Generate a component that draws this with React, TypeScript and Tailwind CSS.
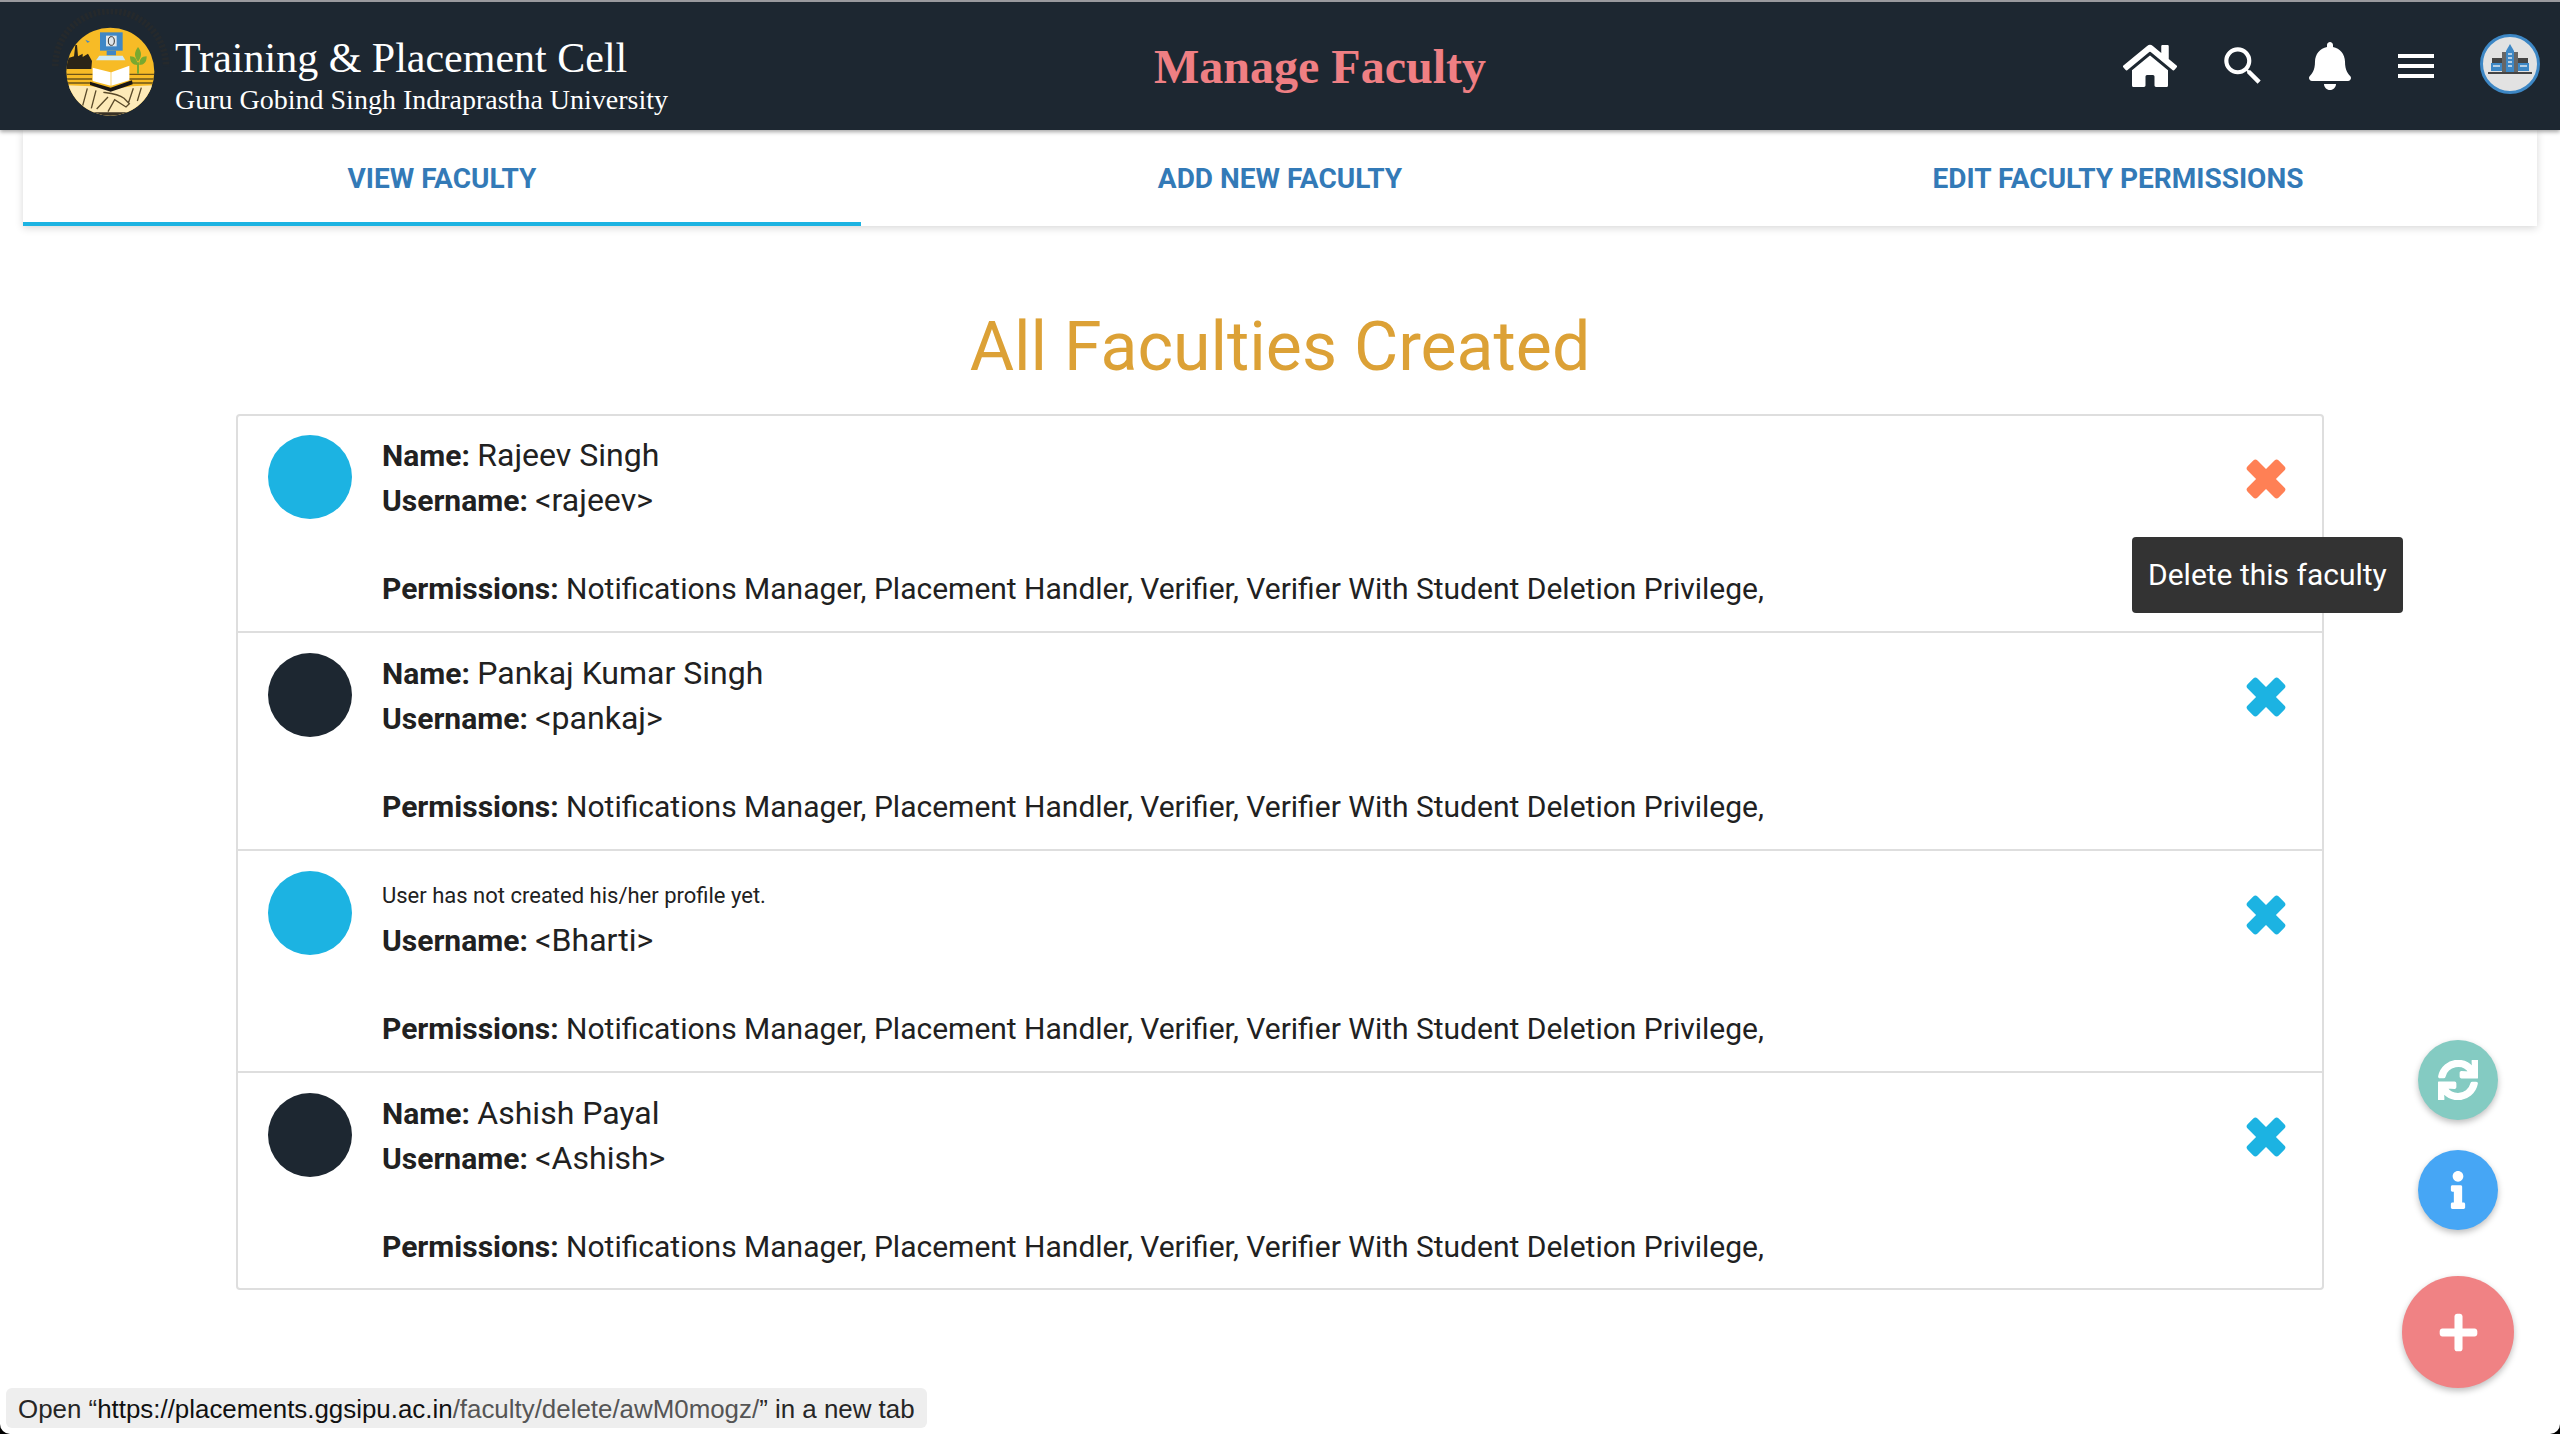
import { FaBell, FaHome, FaInfo, FaPlus, FaSync } from "react-icons/fa";
import { MdMenu, MdSearch } from "react-icons/md";

const faculties = [
  { name: "Rajeev Singh", username: "rajeev", color: "bg-[#1cb3e2]", row: "h-[215px] pt-[19px]" },
  { name: "Pankaj Kumar Singh", username: "pankaj", color: "bg-[#1d2731]", row: "h-[218px] border-t-2 pt-[20px]" },
  { name: "", username: "Bharti", color: "bg-[#1cb3e2]", row: "h-[222px] border-t-2 pt-[20px]" },
  { name: "Ashish Payal", username: "Ashish", color: "bg-[#1d2731]", row: "h-[217px] border-t-2 pt-[20px]" },
];

function Logo() {
  return (
    <svg viewBox="0 0 390 345" className="h-[115px] w-[130px] shrink-0">
      <defs>
        <clipPath id="seal">
          <circle cx="181" cy="188" r="132" />
        </clipPath>
      </defs>
      <path d="M16 172A165 165 0 0 1 348 172" fill="none" stroke="#25292c" strokeWidth="20" strokeDasharray="8 5" />
      <g clipPath="url(#seal)">
        <rect x="40" y="50" width="290" height="280" fill="#f7bb26" />
        <path d="M48 196h80M48 210h78M48 222h76M238 196h90M238 210h90M238 222h90" stroke="#6e5518" strokeWidth="4" />
        <path d="M46 150l26-8 4-34h5l3 34 14-8v10l16-10 12 22-2 24H46z" fill="#2a2418" />
        <path d="M40 228l84 4 60 10 60-10 90-4v110H40z" fill="#fdeab8" />
        <path d="M40 310h300v20H40z" fill="#241d14" opacity="0.9" />
        <path
          d="M112 238l-14 52M138 244l-14 54M160 250c16 2 44 4 62 18l16 16-10 10-34-22-20 36M140 300l34-36M250 238l-14 42M274 236l-12 40"
          fill="none"
          stroke="#5a4a2a"
          strokeWidth="4"
        />
      </g>
      <path d="M106 92l14 6-8 3z" fill="#3f87c6" />
      <path d="M150 70h68v55h-68z" fill="#3f87c6" />
      <path d="M168 80h32v32h-32z" fill="#dfe6ea" />
      <ellipse cx="184" cy="96" rx="9" ry="13" fill="none" stroke="#333" strokeWidth="3" />
      <path d="M170 125h28v14h-28z" fill="#3f87c6" />
      <path d="M148 140h70l8 14h-88z" fill="#cfeaf6" />
      <path d="M264 114c12 16 12 28 0 44-12-16-12-28 0-44z" fill="#79a92f" />
      <path d="M240 142c16 0 22 10 22 26-14 0-22-8-22-26zM290 142c-16 0-22 10-22 26 14 0 22-8 22-26z" fill="#79a92f" />
      <path d="M261 160h6v34h-6z" fill="#79a92f" />
      <path d="M128 176l54 14v40l-54-14zM238 170l-54 20v40l54-16z" fill="#fff" />
      <path d="M120 218l62 18 64-22 2 12-66 22-62-20z" fill="#1a1715" />
    </svg>
  );
}

function CollegeAvatar() {
  return (
    <svg viewBox="0 0 60 60" className="size-[60px]">
      <circle cx="30" cy="30" r="28.5" fill="#e2e2e2" stroke="#3d87c5" strokeWidth="3" />
      <path d="M8 38h44v2H8z" fill="#444" />
      <path d="M22 38V18h16v20z" fill="#666" />
      <path d="M26 38V17l4-7 4 7v21z" fill="#3d87c5" />
      <path d="M12 24h10v5H12zM38 24h10v5H38z" fill="#444" />
      <path d="M11 29h11v8H11zM38 29h11v8H38z" fill="#3d87c5" />
      <path
        d="M28 20h4M28 24h4M28 28h4M28 32h4M13 32h7M40 32h7"
        stroke="#dfe7ee"
        strokeWidth="1.5"
      />
    </svg>
  );
}

function CrossIcon({ className }: { className: string }) {
  return (
    <svg viewBox="0 0 40 40" className={className} fill="currentColor">
      <rect x="13" y="-2" width="14" height="44" rx="3" transform="rotate(45 20 20)" />
      <rect x="13" y="-2" width="14" height="44" rx="3" transform="rotate(-45 20 20)" />
    </svg>
  );
}

export default function App() {
  return (
    <div className="relative h-[1434px] w-[2560px] overflow-hidden bg-white font-['Roboto',sans-serif] text-[#212121]">
      <header className="relative z-10 flex h-[130px] items-center border-t-2 border-[#9a9a9e] bg-[#1d2731] pl-[50px] pr-[20px] shadow-[0_2px_4px_rgba(0,0,0,0.35)]">
        <Logo />
        <div className="ml-[-5px] mt-[18px] w-[1000px] font-['Liberation_Serif',serif] text-white">
          <div className="text-[42px] leading-[50px]">Training &amp; Placement Cell</div>
          <div className="text-[28px] leading-[34px]">Guru Gobind Singh Indraprastha University</div>
        </div>
        <h1 className="absolute left-[1154px] top-[36px] font-['Liberation_Serif',serif] text-[48px] leading-[58px] font-bold text-[#ef7f83]">
          Manage Faculty
        </h1>
        <div className="ml-auto flex items-center">
          <FaHome className="size-[54px] text-white" />
          <MdSearch className="ml-[41px] size-[50px] text-white" />
          <FaBell className="ml-[38px] size-[48px] text-white" />
          <MdMenu className="ml-[38px] size-[48px] text-white" />
          <div className="mb-[4px] ml-[40px]">
            <CollegeAvatar />
          </div>
        </div>
      </header>

      <nav className="mx-[23px] grid h-[96px] grid-cols-3 bg-white text-[28px] font-bold text-[#337ab7] shadow-[0_2px_8px_rgba(0,0,0,0.16)]">
        <div className="flex items-center justify-center border-b-4 border-[#1cb3e2] pt-[6px]">VIEW FACULTY</div>
        <div className="flex items-center justify-center pt-[2px]">ADD NEW FACULTY</div>
        <div className="flex items-center justify-center pt-[2px]">EDIT FACULTY PERMISSIONS</div>
      </nav>

      <h2 className="mt-[81px] text-center text-[68px] leading-[80px] text-[#dca136]">All Faculties Created</h2>

      <ul className="mx-[236px] mt-[27px] rounded-[4px] border-2 border-[#dedede] bg-white">
        {faculties.map((f, i) => (
          <li key={f.username} className={`flex border-[#dedede] pl-[30px] pr-[36px] ${f.row}`}>
            <div className={`size-[84px] shrink-0 rounded-full ${f.color}`} />
            <div className="ml-[30px] mt-[-2px] flex-1 text-[30px] leading-[44px]">
              {f.name ? (
                <div>
                  <b className="font-bold">Name:</b> <span className="text-[32px]">{f.name}</span>
                </div>
              ) : (
                <div className="pt-[5px] text-[22px]">User has not created his/her profile yet.</div>
              )}
              <div>
                <b className="font-bold">Username:</b> <span className="text-[32px]">&lt;{f.username}&gt;</span>
              </div>
              <div className="mt-[44px]">
                <b className="font-bold">Permissions:</b> Notifications Manager, Placement Handler, Verifier, Verifier With
                Student Deletion Privilege,
              </div>
            </div>
            <CrossIcon className={`mt-[24px] size-[40px] shrink-0 ${i === 0 ? "text-[#ff8055]" : "text-[#1cb3e2]"}`} />
          </li>
        ))}
      </ul>

      <div className="absolute left-[2132px] top-[537px] rounded-[4px] bg-[#333333] px-[16px] py-[14px] text-[30px] leading-[48px] text-white">
        Delete this faculty
      </div>

      <button className="absolute left-[2418px] top-[1040px] flex size-[80px] items-center justify-center rounded-full bg-[#84cbc2] text-white shadow-[0_3px_6px_rgba(0,0,0,0.25)]">
        <FaSync className="size-[40px]" strokeWidth={22} />
      </button>
      <button className="absolute left-[2418px] top-[1150px] flex size-[80px] items-center justify-center rounded-full bg-[#46a6f5] text-white shadow-[0_3px_6px_rgba(0,0,0,0.25)]">
        <FaInfo className="size-[38px]" />
      </button>
      <button className="absolute left-[2402px] top-[1276px] flex size-[112px] items-center justify-center rounded-full bg-[#f08284] text-white shadow-[0_3px_6px_rgba(0,0,0,0.25)]">
        <FaPlus className="size-[43px]" />
      </button>

      <div className="absolute bottom-[6px] left-[6px] rounded-[6px] bg-[#eeeeee] pb-[5px] pl-[12px] pr-[12px] pt-[7px] font-['Liberation_Sans',sans-serif] text-[25.9px] leading-[28px] text-[#262626]">
        Open “<span className="text-[#111]">https://placements.ggsipu.ac.in</span>
        <span className="text-[#555]">/faculty/delete/awM0mogz/</span>” in a new tab
      </div>

      <div className="pointer-events-none absolute inset-0 rounded-b-[10px] shadow-[0_0_0_20px_#000]" />
    </div>
  );
}
